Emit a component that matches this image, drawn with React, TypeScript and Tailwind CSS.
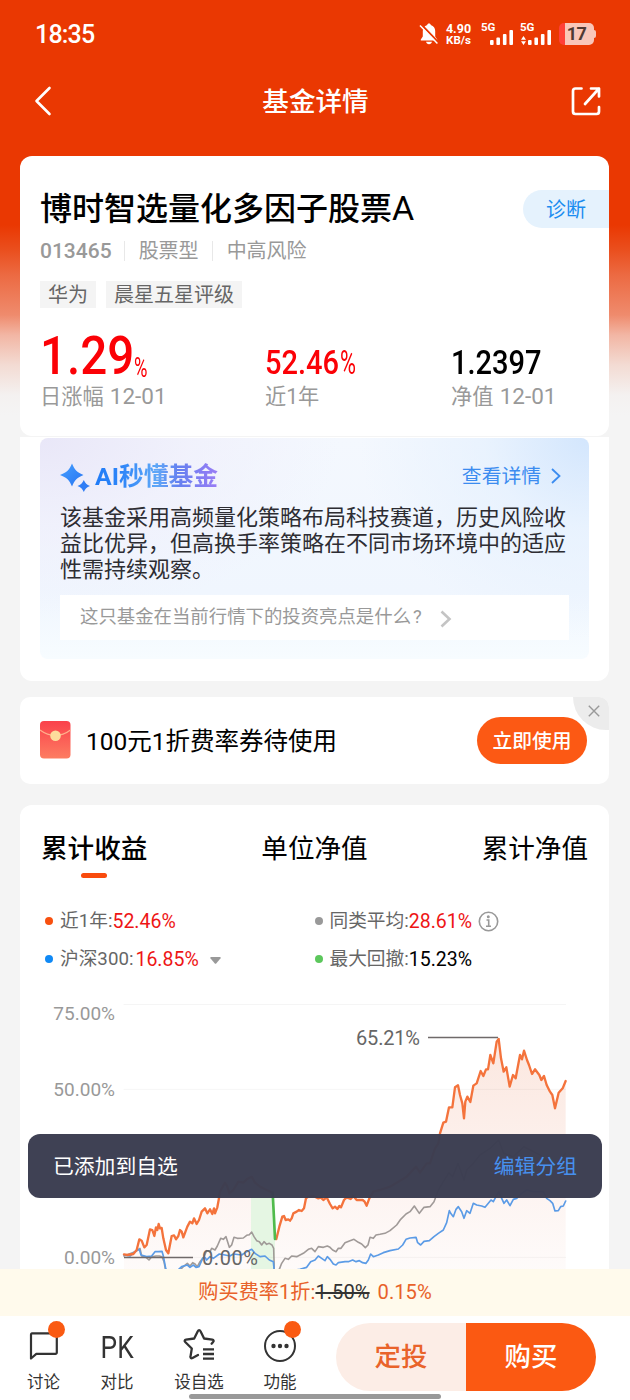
import type { ReactNode } from 'react';

// Chart series, in thirds of a pixel from the chart origin
const FUND_A =
  '72,763 82,765 100,762 110,750 118,718 125,722 133,742 140,735 150,688 157,690 163,708 168,682 172,690 176,672 180,685 185,684 190,715 198,750 205,760 215,708 222,706 228,718 235,708 240,690 245,695 250,712 262,680 270,665 277,670 282,655 290,672 297,660 305,635 315,625 322,640 330,628 337,642 342,625 345,640 352,622 356,600 360,575 375,548 382,560 388,580 400,570 415,545 430,548 440,538 455,530 465,548 480,560 500,570 518,578';
const FUND_B =
  '529,717 538,680 547,650 552,648 557,660 565,658 570,662 575,655 580,640 590,635 597,630 605,633 612,625 618,595 625,590 640,588 655,595 662,592 670,600 680,592 690,612 698,625 705,620 712,627 718,618 723,622 732,600 740,592 752,597 760,588 770,600 780,600 788,600 794,605 800,617 808,595 820,575 840,570 870,560 895,545 920,530 948,500 960,518 980,490 990,490 1005,445 1015,430 1020,400 1030,368 1038,365 1047,322 1057,322 1065,262 1074,256 1080,285 1087,310 1092,355 1096,305 1102,290 1111,306 1120,257 1130,250 1142,213 1150,228 1158,208 1164,208 1171,165 1180,190 1190,125 1196,117 1203,175 1211,215 1219,202 1229,260 1239,225 1247,235 1260,165 1266,178 1272,152 1281,180 1287,195 1296,222 1305,208 1318,225 1324,240 1332,228 1340,255 1350,275 1357,285 1365,325 1376,278 1388,265 1397,243';
const AVERAGE =
  '72,768 105,755 120,745 125,768 138,772 147,780 155,770 168,768 178,768 186,770 192,785 197,812 238,812 250,800 262,790 270,798 278,788 285,792 292,800 300,785 312,770 320,752 330,755 335,745 345,750 352,738 362,715 370,718 378,710 388,742 395,735 402,712 412,715 430,714 440,706 448,704 455,696 462,710 470,722 478,725 485,735 492,725 500,733 508,730 516,735 521,745 523,815 538,808 545,790 555,775 565,778 575,768 590,770 610,760 625,748 635,745 645,755 655,740 670,742 682,738 690,742 698,750 708,755 715,745 723,745 735,728 750,722 762,718 775,727 785,732 796,743 804,735 810,712 820,715 828,705 840,703 855,700 870,692 890,675 902,658 918,642 930,635 943,618 958,640 972,622 990,620 1002,605 1015,570 1030,545 1047,518 1058,530 1074,490 1092,540 1100,510 1120,490 1140,465 1170,445 1196,420 1211,460 1240,470 1272,440 1320,465 1365,500 1397,460';
const CSI300 =
  '72,765 90,768 105,755 118,748 123,765 140,770 155,768 165,755 175,755 186,754 190,768 197,805 200,815 232,812 245,800 262,795 270,802 280,795 288,802 297,800 308,775 315,772 320,780 330,770 340,775 358,762 375,765 390,768 400,762 425,765 440,755 455,748 465,760 480,770 495,768 508,780 520,785 523,815 575,812 600,808 620,802 632,785 645,780 655,768 665,775 675,782 682,770 690,778 700,792 708,795 715,788 735,785 745,785 758,780 768,785 778,782 788,788 798,790 805,780 812,762 820,770 835,765 850,758 870,752 895,747 908,735 918,718 930,714 948,712 953,728 962,735 972,724 988,722 1002,710 1015,700 1030,690 1040,668 1048,632 1052,640 1060,650 1068,628 1075,620 1085,635 1092,655 1100,632 1110,640 1120,610 1130,615 1145,618 1155,622 1165,610 1173,600 1180,605 1196,575 1205,595 1212,610 1220,600 1230,617 1240,598 1250,595 1265,580 1280,570 1300,575 1330,575 1340,595 1350,602 1358,610 1365,633 1375,632 1382,620 1390,618 1397,603';

function SignalBars() {
  return (
    <svg width="24" height="15" viewBox="0 0 24 15" fill="#fff">
      <rect x="0" y="10" width="3.6" height="5" rx="1" />
      <rect x="6.4" y="7.500" width="3.6" height="7.500" rx="1" />
      <rect x="12.9" y="4" width="3.6" height="11" rx="1" />
      <rect x="19.4" y="0" width="3.6" height="15" rx="1" />
    </svg>
  );
}

function StatusBar() {
  return (
    <div className="flex h-[68px] items-center justify-between pl-[35px] pr-[34px] text-white">
      <span className="text-[25px] font-medium leading-none tracking-[-0.8px]">18:35</span>
      <div className="flex h-[22px] items-start">
        <svg width="20" height="22" viewBox="0 0 20 22" fill="#fff">
          <path d="M10 .5c-1 0-1.8.7-1.8 1.5C5.4 2.800 3.800 5.200 3.800 8v5.500L1.800 16.500v1h16.400v-1l-2-3V8c0-2.800-1.600-5.200-4.400-6C11.800 1.200 11 .500 10 .500z" />
          <path d="M7 18.800h6c-.4 1.500-1.500 2.500-3 2.500s-2.600-1-3-2.500z" />
          <path d="M2.200 1.500l17.600 18.300" stroke="#ea3802" strokeWidth="2" />
          <path d="M1 2.500l17.400 18" stroke="#fff" strokeWidth="1.500" />
        </svg>
        <div className="ml-[6px] w-[27px] text-center text-[12.500px] font-bold leading-[12px]">
          <div>4.90</div>
          <div className="text-[11.500px] leading-[11px]">KB/s</div>
        </div>
        <div className="relative ml-[9px] h-[22px] w-[33px]">
          <span className="block text-[11.500px] font-bold leading-[9px]">5G</span>
          <div className="absolute bottom-0 right-0">
            <SignalBars />
          </div>
        </div>
        <div className="relative ml-[6px] h-[22px] w-[32px]">
          <span className="block text-[11.500px] font-bold leading-[9px]">5G</span>
          <svg className="absolute bottom-0 left-[1px]" width="5" height="9" viewBox="0 0 5 9" fill="#fff">
            <path d="M2.500 0L5 3.800H0zM2.500 9L5 5.200H0z" />
          </svg>
          <div className="absolute bottom-0 right-0">
            <SignalBars />
          </div>
        </div>
        <div className="ml-[7px] flex items-center">
          <div className="flex h-[22px] w-[35px] items-center justify-center overflow-hidden rounded-[5px] bg-[linear-gradient(90deg,#ff4038_6px,#f9c6b9_6px)] text-[18px] font-bold leading-none tracking-[-0.5px] text-[#4f3a33]">
            17
          </div>
          <div className="h-[8px] w-[2px] rounded-r-[2px] bg-[#f9c6b9]" />
        </div>
      </div>
    </div>
  );
}

function NavBar() {
  return (
    <div className="flex h-[88px] items-start justify-between pl-[34px] pr-[29px] pt-[17px]">
      <svg className="mt-[1px]" width="18" height="30" viewBox="0 0 18 30" fill="none" stroke="#fff" strokeWidth="2.600" strokeLinecap="round" strokeLinejoin="round">
        <path d="M15.500 2L2.500 15l13 13" />
      </svg>
      <h1 className="ml-[8px] mt-px text-[26.600px] font-medium leading-[32px] text-white">基金详情</h1>
      <svg width="30" height="32" viewBox="0 0 30 32" fill="none" stroke="#fff" strokeWidth="2.700" strokeLinecap="round" strokeLinejoin="round">
        <path d="M10.500 3.500H4.500a2.500 2.500 0 0 0-2.500 2.500v20.500a2.500 2.500 0 0 0 2.500 2.500h21a2.500 2.500 0 0 0 2.500-2.500V22M20 3.500h8v8M28 3.500L14 19" />
      </svg>
    </div>
  );
}

function Tag({ children }: { children: ReactNode }) {
  return <span className="h-[27px] bg-[#f4f4f4] px-2 text-[20px] leading-[28px] text-[#666]">{children}</span>;
}

function FundSummary() {
  return (
    <section className="h-[280px] overflow-hidden rounded-xl bg-white pl-5">
      <div className="flex items-start justify-between pt-[33px]">
        <h2 className="h-[40px] text-[32px] font-medium leading-[40px] text-black">
          博时智选量化多因子股票<span className="text-[34px] font-normal leading-none">A</span>
        </h2>
        <button className="mt-[1px] h-[38px] w-[86px] rounded-l-full bg-[#e5f2fd] text-[20px] leading-[40px] text-[#1a8cf0]">诊断</button>
      </div>
      <div className="mt-[10px] flex h-[24px] items-center text-[20px] leading-[24px] text-[#999]">
        <span className="text-[21px] font-medium">013465</span>
        <span className="ml-[12px] mr-[14px] h-[20px] w-px bg-[#e8e8e8]" />
        <span>股票型</span>
        <span className="mx-[13.500px] h-[20px] w-px bg-[#e8e8e8]" />
        <span>中高风险</span>
      </div>
      <div className="mt-[18px] flex gap-[10px]">
        <Tag>华为</Tag>
        <Tag>晨星五星评级</Tag>
      </div>
      <div className="mt-[25px] flex items-end">
        <div className="w-[225px]">
          <div className="flex h-[48px] items-end text-[#fb0106]">
            <span className="w-[94px] origin-left scale-x-[0.88] text-[54px] font-medium leading-[50px]">1.29</span>
            <span className="origin-left scale-x-[0.68] text-[27px] leading-[26px]">%</span>
          </div>
          <div className="mt-[3px] h-[26px] text-[21.200px] leading-[26px] text-[#999]">
            日涨幅 <span className="ml-px text-[22.500px] leading-none">12-01</span>
          </div>
        </div>
        <div className="w-[186px]">
          <div className="flex text-[33px] leading-[36px] text-[#fb0106]">
            <span className="w-[75px] origin-left scale-x-[0.88] font-medium">52.46</span>
            <span className="origin-left scale-x-[0.66]">%</span>
          </div>
          <div className="mt-[3px] h-[26px] text-[21.200px] leading-[26px] text-[#999]">近1年</div>
        </div>
        <div>
          <div className="w-[90px] origin-left scale-x-[0.88] text-[33px] font-medium leading-[36px] text-black">1.2397</div>
          <div className="mt-[3px] h-[26px] text-[21.200px] leading-[26px] text-[#999]">
            净值 <span className="ml-px text-[22.500px] leading-none">12-01</span>
          </div>
        </div>
      </div>
    </section>
  );
}

function AiInsight() {
  return (
    <section className="h-[244px] rounded-b-xl bg-white px-5 pt-[1px]">
      <div className="h-[221px] w-[549px] rounded-lg bg-[radial-gradient(230px_200px_at_100%_0%,#d3e6fd_0%,rgba(226,239,254,0.6)_45%,rgba(240,247,255,0)_100%),radial-gradient(300px_180px_at_0%_0%,#e9e7f8_0%,rgba(239,238,251,0.65)_50%,rgba(245,248,255,0)_100%),linear-gradient(180deg,#f4f8fe_0%,#f0f6fe_70%,#f7fcff_100%)] px-5 pt-[22px]">
        <div className="flex h-[32px] items-center justify-between">
          <div className="flex items-center">
            <svg className="mt-[4px]" width="31" height="30" viewBox="0 0 31 30">
              <defs>
                <linearGradient id="spark" x1="0" y1="0" x2="1" y2="1">
                  <stop offset="0" stopColor="#46a0ff" />
                  <stop offset="1" stopColor="#2673f2" />
                </linearGradient>
              </defs>
              <path d="M12 .500c2.300 6 5.500 9.200 11.500 11.500-6 2.300-9.200 5.500-11.500 11.500C9.700 17.500 6.500 14.300 0 12 6.500 9.700 9.700 6.500 12 .500z" fill="url(#spark)" />
              <path d="M23.800 17c1.300 3.200 3 4.700 6.200 6-3.200 1.300-4.900 2.800-6.200 6-1.300-3.200-3-4.700-6.300-6 3.300-1.300 5-2.800 6.300-6z" fill="#2f7df5" />
            </svg>
            <h3 className="ml-[4px] mt-[2px] bg-[linear-gradient(90deg,#1f7bf7_0%,#2f86f8_22%,#5fa8f7_50%,#6580f0_68%,#9a7cf5_100%)] bg-clip-text text-[24.800px] font-bold leading-[32px] text-transparent">
              AI秒懂基金
            </h3>
          </div>
          <a className="mt-px flex items-center pr-[8px] text-[19.800px] leading-[30px] text-[#3b8cf0]">
            查看详情
            <svg className="ml-[10px] -mt-px" width="10" height="18" viewBox="0 0 10 18" fill="none" stroke="#3b8cf0" strokeWidth="1.800">
              <path d="M1 2l7.500 7L1 16" />
            </svg>
          </a>
        </div>
        <p className="mt-[13px] w-[510px] text-[22px] leading-[26px] text-[#2d2d33]">
          该基金采用高频量化策略布局科技赛道，历史风险收
          <br />
          益比优异，但高换手率策略在不同市场环境中的适应
          <br />
          性需持续观察。
        </p>
        <div className="mt-[12px] flex h-[45px] items-center bg-white pl-[20px] text-[18.400px] leading-none text-[#999]">
          <span>
            这只基金在当前行情下的投资亮点是什么<span className="ml-[2px]">?</span>
          </span>
          <svg className="ml-[18px] mt-[3px]" width="12" height="18" viewBox="0 0 12 18" fill="none" stroke="#c4c4c4" strokeWidth="2.600">
            <path d="M1.500 1.500L9.500 9l-8 7.500" />
          </svg>
        </div>
      </div>
    </section>
  );
}

function CouponBar() {
  return (
    <section className="relative mt-4 flex h-[87px] items-center overflow-hidden rounded-[10px] bg-white pl-5 pr-[22px]">
      <svg className="-mt-px" width="31" height="38" viewBox="0 0 31 38">
        <defs>
          <linearGradient id="packet" x1="0" y1="0" x2="0" y2="1">
            <stop offset="0" stopColor="#fa414b" />
            <stop offset="1" stopColor="#fd7d62" />
          </linearGradient>
        </defs>
        <rect width="30.500" height="37.500" rx="4" fill="url(#packet)" />
        <path d="M0 9c5 3.800 10 5.500 15.300 5.500S25.500 12.800 30.500 9" fill="none" stroke="#ffb08c" strokeWidth="1.300" />
        <circle cx="15.500" cy="14.800" r="5.300" fill="#fddc9c" />
      </svg>
      <span className="ml-[15px] mt-[3px] text-[24.500px] leading-[30px] text-black">100元1折费率券待使用</span>
      <div className="absolute right-0 top-0 h-[33px] w-[36px] rounded-bl-full bg-[#ececec]" />
      <svg className="absolute right-[9px] top-[8px]" width="12" height="12" viewBox="0 0 12 12" stroke="#999" strokeWidth="1.400">
        <path d="M.8.800l10.400 10.400M11.200.800L.8 11.200" />
      </svg>
      <button className="relative ml-auto h-[47px] w-[110px] rounded-full bg-[#fc5914] text-[19.800px] font-medium leading-[49px] text-white">立即使用</button>
    </section>
  );
}

interface LegendItemProps {
  dot: string;
  label: string;
  value: string;
  valueClass: string;
  children?: ReactNode;
}

function LegendItem({ dot, label, value, valueClass, children }: LegendItemProps) {
  return (
    <div className="flex h-[38px] items-center text-[18.700px] leading-none">
      <span className={`mr-[7px] h-[8px] w-[8px] rounded-full ${dot}`} />
      <span className="mt-px text-[#666]">{label}:</span>
      <span className={`mt-px text-[19.500px] ${valueClass}`}>{value}</span>
      {children}
    </div>
  );
}

function Chart() {
  return (
    <svg className="absolute left-0 top-[185px] block" width="589" height="279" viewBox="20 990 589 279" fontSize="19" fill="#999">
      <defs>
        <linearGradient id="area" x1="0" y1="0" x2="0" y2="1">
          <stop offset="0" stopColor="#fbe7df" />
          <stop offset="0.600" stopColor="#fdf3f0" />
          <stop offset="1" stopColor="#fefbfa" />
        </linearGradient>
      </defs>
      <g transform="translate(100 1000) scale(0.333333)" fill="none" strokeLinejoin="round" strokeLinecap="round">
        <polygon points={`${FUND_A} ${FUND_B} 1397,820 72,820`} fill="url(#area)" />
        <polygon points="453,530 465,548 480,560 500,570 518,578 525,717 525,820 453,820" fill="#e5f6e3" />
        <g stroke="#000" strokeOpacity="0.045" strokeWidth="3">
          <path d="M72 13.500H1397M72 268H1397M72 520H1397M72 772H1397" />
        </g>
        <polyline points={AVERAGE} stroke="#a09a98" strokeWidth="4.800" />
        <polyline points={CSI300} stroke="#5b9be6" strokeWidth="5" />
        <polyline points={FUND_A} stroke="#f4733c" strokeWidth="7" />
        <polyline points={FUND_B} stroke="#f4733c" strokeWidth="7" />
        <path d="M518 578L522 655l3 62" stroke="#50bb4c" strokeWidth="8" />
      </g>
      <g textAnchor="end">
        <text x="115" y="1019.500">75.00%</text>
        <text x="115" y="1095.500">50.00%</text>
        <text x="115" y="1264">0.00%</text>
      </g>
      <g fontSize="20" fill="#666">
        <text x="356" y="1044.500" textLength="64">65.21%</text>
        <text x="202" y="1264.500" textLength="56">0.00%</text>
      </g>
      <path d="M428 1037.500h70M124 1257.500h69" stroke="#6f6a6a" strokeWidth="1.500" />
    </svg>
  );
}

function Performance() {
  return (
    <section className="relative mt-[21px] h-[464px] overflow-hidden rounded-t-xl bg-white">
      <div className="flex justify-between px-[21px] pt-[26px] text-[26.600px] leading-[36px] text-black">
        <div className="font-medium">
          累计收益
          <div className="mx-auto mt-[6px] h-[5px] w-[26px] rounded-full bg-[#f94b0d]" />
        </div>
        <div>单位净值</div>
        <div>累计净值</div>
      </div>
      <div className="mt-[24px] grid grid-cols-[269.500px_1fr] pl-[25px]">
        <LegendItem dot="bg-[#f8500f]" label="近1年" value="52.46%" valueClass="text-[#ee1515]" />
        <LegendItem dot="bg-[#999]" label="同类平均" value="28.61%" valueClass="text-[#ee1515]">
          <svg className="ml-[6px]" width="21" height="21" viewBox="0 0 21 21" fill="none" stroke="#999" strokeWidth="1.600">
            <circle cx="10.500" cy="10.500" r="9.200" />
            <path d="M8.500 9h2.200v6M8 15.200h5" />
            <circle cx="10.300" cy="5.800" r="0.700" fill="#999" />
          </svg>
        </LegendItem>
        <LegendItem dot="bg-[#1089f5]" label="沪深300" value="16.85%" valueClass="ml-[2px] text-[#ee1515]">
          <svg className="ml-[11px] mt-[3px]" width="11" height="7" viewBox="0 0 11 7" fill="#999">
            <path d="M1 0h9a.8.8 0 0 1 .6 1.300L6.200 6.500a1 1 0 0 1-1.400 0L.4 1.300A.8.8 0 0 1 1 0z" />
          </svg>
        </LegendItem>
        <LegendItem dot="bg-[#5cc75c]" label="最大回撤" value="15.23%" valueClass="text-black" />
      </div>
      <Chart />
    </section>
  );
}

function Toast() {
  return (
    <div className="absolute left-[28px] top-[1134px] flex h-[64px] w-[574px] items-center justify-between rounded-xl bg-[#3b3d51]/98 pl-[25px] pr-[25px] pt-[2px] text-[20.800px] leading-none">
      <span className="text-white">已添加到自选</span>
      <span className="text-[#4790ee]">编辑分组</span>
    </div>
  );
}

function NavItem({ label, badge, children }: { label: string; badge?: boolean; children: ReactNode }) {
  return (
    <div className="flex flex-col items-center">
      <div className="relative flex h-[34px] w-[34px] items-center justify-center">
        {children}
        {badge && <span className="absolute -right-[4px] -top-[7px] h-[17px] w-[17px] rounded-full bg-[#fa5a12]" />}
      </div>
      <span className="mt-[11px] text-[16.500px] leading-[20px] text-[#333]">{label}</span>
    </div>
  );
}

function BottomBar() {
  return (
    <div className="relative flex h-[84px] bg-white">
      <div className="grid w-[336px] grid-cols-[87px_60px_104px_58px] pt-[12px]">
        <NavItem label="讨论" badge>
          <svg width="30" height="30" viewBox="0 0 30 30" fill="none" stroke="#333" strokeWidth="2.200" strokeLinejoin="round">
            <path d="M3 3.300h23.500a1.300 1.300 0 0 1 1.300 1.300v18a1.300 1.300 0 0 1-1.300 1.300H7.300L2 28.500V4.600A1.300 1.300 0 0 1 3 3.300z" />
          </svg>
        </NavItem>
        <NavItem label="对比">
          <span className="mt-[3px] scale-x-[0.820] text-[32px] leading-none text-[#333]">PK</span>
        </NavItem>
        <NavItem label="设自选">
          <svg width="34" height="34" viewBox="0 0 34 34" fill="none" stroke="#333" strokeWidth="2.300" strokeLinecap="round" strokeLinejoin="round">
            <path d="M16 28.500l-5.500 3c-1.300.7-2.300 0-2-1.400l1.300-8.100-6.600-6.500c-1-1-.6-2.100.8-2.300l8.200-1.200 3.700-7.500c.6-1.300 1.900-1.300 2.500 0l3.700 7.500 8.200 1.200c1.400.2 1.800 1.300.8 2.300l-1.500 1.700" transform="translate(0 -1.500)" />
            <path d="M21 21.300h11M21 26h11M21 30.700h11" strokeLinecap="butt" />
          </svg>
        </NavItem>
        <NavItem label="功能" badge>
          <svg width="34" height="34" viewBox="0 0 34 34" fill="none" stroke="#333" strokeWidth="2">
            <circle cx="17" cy="18" r="15" />
            <g fill="#333" stroke="none">
              <circle cx="10.500" cy="18" r="2.200" />
              <circle cx="17" cy="18" r="2.200" />
              <circle cx="23.500" cy="18" r="2.200" />
            </g>
          </svg>
        </NavItem>
      </div>
      <div className="mt-[7px] flex h-[68px] w-[260px] overflow-hidden rounded-full text-[26.400px] font-medium leading-[69px]">
        <button className="w-1/2 bg-[#fcede6] text-[#e9632a]">定投</button>
        <button className="w-1/2 bg-[#fb5912] text-white">购买</button>
      </div>
      <div className="absolute bottom-[1px] left-[189px] h-[5px] w-[252px] rounded-full bg-[#999]" />
    </div>
  );
}

export default function App() {
  return (
    <div className='relative h-[1400px] w-[630px] overflow-hidden bg-[#f4f4f4] bg-[linear-gradient(180deg,#ea3802_0px,#ea3802_225px,#ea4f1e_250px,#ec6a42_275px,#ef8b6d_315px,#f2b6a4_335px,#f3dbd3_365px,#f4f1f0_395px,#f4f4f4_415px)] font-[Roboto,"Noto_Sans_CJK_SC",sans-serif]'>
      <StatusBar />
      <NavBar />
      <main className="ml-5 w-[589px]">
        <FundSummary />
        <div className="h-px" />
        <AiInsight />
        <CouponBar />
        <Performance />
      </main>
      <div className="flex h-[47px] items-center justify-center bg-[#fffaec] text-[20.200px] leading-none text-[#e8622a]">
        购买费率1折:
        <span className="text-[#333] line-through">1.50%</span>
        <span className="ml-[8px]">0.15%</span>
      </div>
      <BottomBar />
      <Toast />
    </div>
  );
}
